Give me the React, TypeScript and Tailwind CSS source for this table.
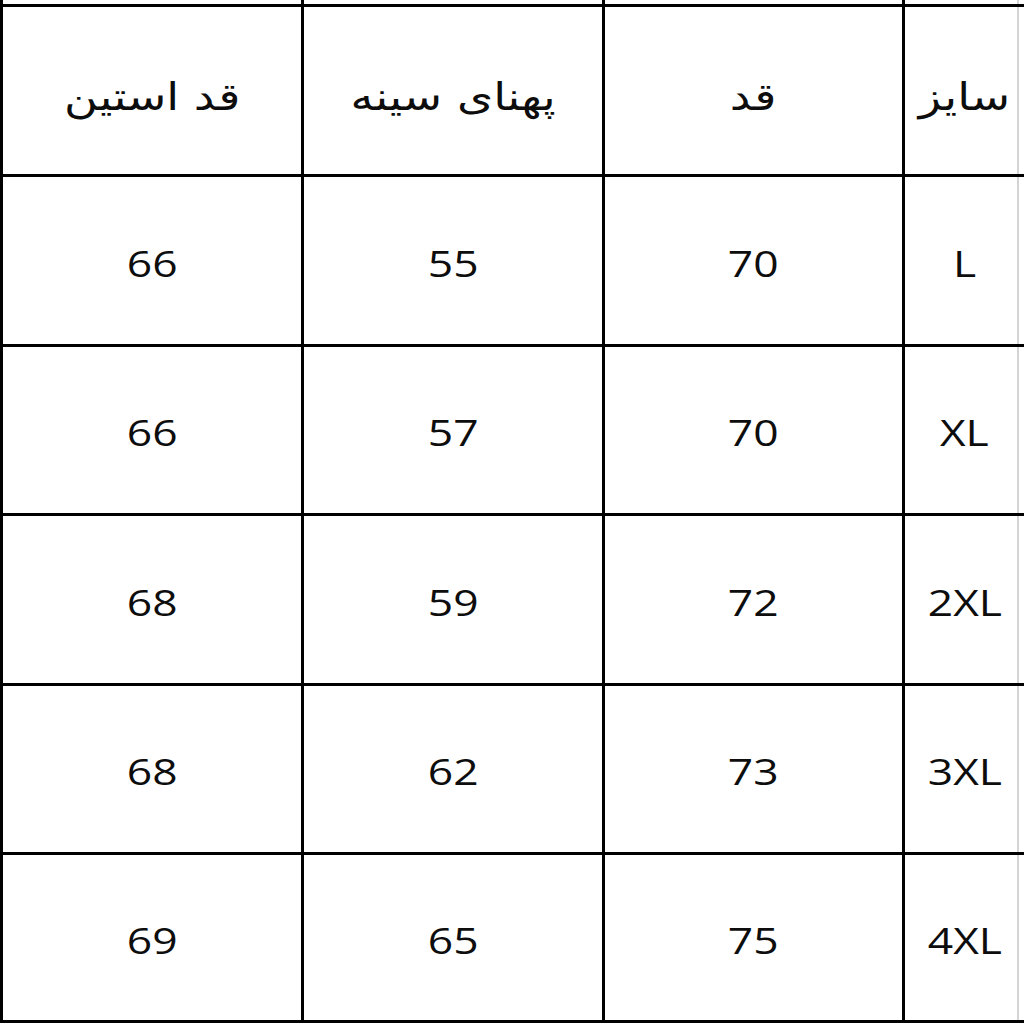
import React from "react";

const header = ["قد استین", "پهنای سینه", "قد", "سایز"];
const rows = [
  ["66", "55", "70", "L"],
  ["66", "57", "70", "XL"],
  ["68", "59", "72", "2XL"],
  ["68", "62", "73", "3XL"],
  ["69", "65", "75", "4XL"],
];

function Cell({ children, last }: { children?: React.ReactNode; last?: boolean }) {
  if (last) {
    return (
      <div className="bg-white flex">
        <div className="flex-1 flex items-center justify-center pl-[7px]">{children}</div>
        <div className="w-[2px] bg-[#d4d4d4]" />
        <div className="w-[5px]" />
      </div>
    );
  }
  return <div className="bg-white flex items-center justify-center">{children}</div>;
}

export default function App() {
  return (
    <div className="w-[1024px] h-[1024px] bg-white overflow-hidden">
      <div
        className="grid bg-black pl-[3px] pb-[3px] gap-[3px] grid-cols-[298px_298px_297px_119px] grid-rows-[4px_167px_167px_166px_167px_166px_165px] text-[37px] text-[#0d0d0d]"
        style={{ fontFamily: '"Open Sans", "DejaVu Sans", sans-serif' }}
      >
        <Cell />
        <Cell />
        <Cell />
        <Cell last />
        {header.map((h, i) => (
          <Cell key={"h" + i} last={i === 3}>
            <span
              dir="rtl"
              className="inline-block pt-[14px] text-[38px] scale-x-[1.22]"
              style={{ fontFamily: '"DejaVu Sans", sans-serif' }}
            >
              {h}
            </span>
          </Cell>
        ))}
        {rows.map((r, ri) =>
          r.map((v, ci) => (
            <Cell key={ri + "-" + ci} last={ci === 3}>
              <span className="inline-block pt-[4px] font-medium scale-x-[1.2]">{v}</span>
            </Cell>
          ))
        )}
      </div>
    </div>
  );
}
